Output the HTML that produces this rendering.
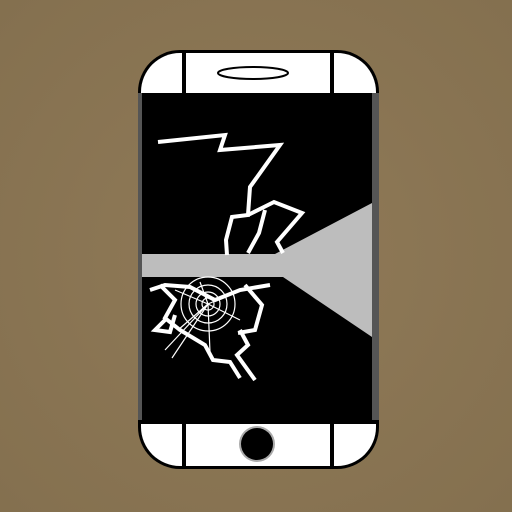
<!DOCTYPE html>
<html><head><style>
html,body{margin:0;padding:0;width:512px;height:512px;overflow:hidden;background:#8b7556;}
</style></head><body>
<svg width="512" height="512" viewBox="0 0 512 512" xmlns="http://www.w3.org/2000/svg">
<defs>
<radialGradient id="bg" cx="50%" cy="50%" r="70%">
<stop offset="0" stop-color="#907a58"/><stop offset="1" stop-color="#84704f"/>
</radialGradient>
</defs>
<rect width="512" height="512" fill="url(#bg)"/>
<!-- phone body -->
<rect x="138" y="50" width="241" height="419" rx="42" fill="#000"/>
<rect x="141" y="53" width="235" height="413" rx="39" fill="#fff"/>
<rect x="138" y="93" width="241" height="330" fill="#555"/>
<rect x="142" y="93" width="230" height="330" fill="#000"/>
<!-- dividers -->
<rect x="182" y="53" width="4" height="40" fill="#000"/>
<rect x="330" y="53" width="4" height="40" fill="#000"/>
<rect x="182" y="423" width="4" height="44" fill="#000"/>
<rect x="330" y="423" width="4" height="44" fill="#000"/>
<rect x="138" y="420" width="241" height="4" fill="#000"/>
<ellipse cx="253" cy="73" rx="35" ry="6" fill="none" stroke="#000" stroke-width="2"/>
<circle cx="257" cy="444" r="18" fill="#aaa"/>
<circle cx="257" cy="444" r="16" fill="#000"/>
<!-- gray glare -->
<polygon points="142,254 275,254 372,203 372,337 283,277 142,277" fill="#bdbdbd"/>
<!-- cracks -->
<g fill="none" stroke="#fff" stroke-width="4" stroke-linejoin="miter">
<polyline points="158,142 225,135 220,150 280,145 250,187 248,215 232,217 226,240 227,255" />
<polyline points="248,215 274,202 302,213 277,242 283,253"/>
<polyline points="265,210 259,233 248,253"/>
<polyline points="160,285 175,300 165,318 180,330 205,345 213,360 230,362 240,378"/>
<polyline points="240,330 248,345 237,355 255,380"/>
<polyline points="245,285 262,305 255,330 238,333"/>
<polyline points="150,290 165,285 190,287 215,300 240,290 270,285"/>
<polyline points="165,320 155,330 170,332 175,315"/>
</g>
<polygon points="158,142 225,134 222,137" fill="#fff"/>
<g fill="none" stroke="#fff" stroke-width="1.2">
<circle cx="208" cy="304" r="6"/>
<circle cx="208" cy="304" r="12"/>
<circle cx="208" cy="304" r="19"/>
<circle cx="208" cy="304" r="27"/>
<line x1="208" y1="304" x2="175" y2="290"/>
<line x1="208" y1="304" x2="240" y2="290"/>
<line x1="208" y1="304" x2="178" y2="330"/>
<line x1="208" y1="304" x2="210" y2="352"/>
<line x1="208" y1="304" x2="240" y2="320"/>
<line x1="208" y1="304" x2="200" y2="282"/>
<line x1="208" y1="304" x2="165" y2="350"/>
<line x1="208" y1="304" x2="172" y2="358"/>
</g>
</svg>
</body></html>
